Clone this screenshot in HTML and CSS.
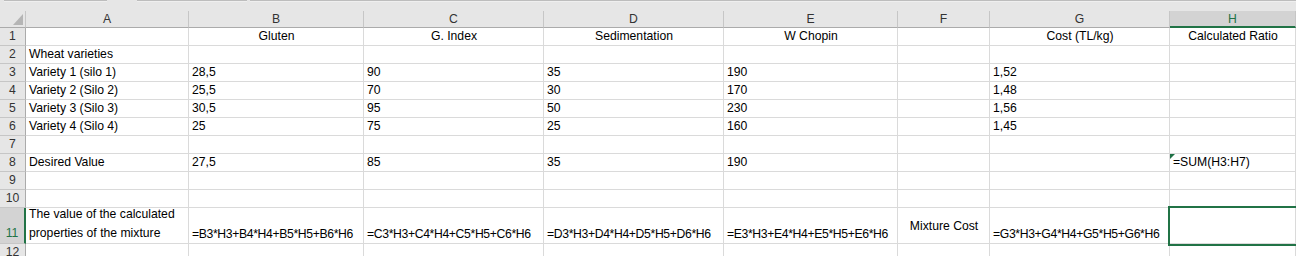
FILE: index.html
```html
<!DOCTYPE html>
<html lang="en">
<head>
    <meta charset="UTF-8">
    <meta name="viewport" content="width=device-width, initial-scale=1.0">
    <title>Wheat blend</title>
    <link rel="stylesheet" href="styles.css">
</head>
<body>
    <div class="strip">
        <span class="tab tab-1"></span>
        <span class="tab tab-2"></span>
        <span class="tab tab-3"></span>
    </div>
    <div class="sheet" id="sheet"></div>

    <script>
        const cols = ['A', 'B', 'C', 'D', 'E', 'F', 'G', 'H'];
        const rows = [
            ['', 'Gluten', 'G. Index', 'Sedimentation', 'W Chopin', '', 'Cost (TL/kg)', 'Calculated Ratio'],
            ['Wheat varieties', '', '', '', '', '', '', ''],
            ['Variety 1 (silo 1)', '28,5', '90', '35', '190', '', '1,52', ''],
            ['Variety 2 (Silo 2)', '25,5', '70', '30', '170', '', '1,48', ''],
            ['Variety 3 (Silo 3)', '30,5', '95', '50', '230', '', '1,56', ''],
            ['Variety 4 (Silo 4)', '25', '75', '25', '160', '', '1,45', ''],
            ['', '', '', '', '', '', '', ''],
            ['Desired Value', '27,5', '85', '35', '190', '', '', '=SUM(H3:H7)'],
            ['', '', '', '', '', '', '', ''],
            ['', '', '', '', '', '', '', ''],
            ['The value of the calculated properties of the mixture',
             '=B3*H3+B4*H4+B5*H5+B6*H6', '=C3*H3+C4*H4+C5*H5+C6*H6',
             '=D3*H3+D4*H4+D5*H5+D6*H6', '=E3*H3+E4*H4+E5*H5+E6*H6',
             'Mixture Cost', '=G3*H3+G4*H4+G5*H5+G6*H6', ''],
            ['', '', '', '', '', '', '', '']
        ];

        let html = '<div class="corner"><span class="select-all"></span></div>';
        cols.forEach(c => {
            html += `<div class="col-head${c === 'H' ? ' active' : ''}">${c}</div>`;
        });
        rows.forEach((row, r) => {
            const n = r + 1;
            const tall = n === 11 ? ' tall' : '';
            html += `<div class="row-head${tall}${n === 11 ? ' active' : ''}">${n}</div>`;
            row.forEach((val, i) => {
                let cls = 'cell' + tall;
                if (n === 1) cls += ' center';
                if (val.startsWith('=') && val.length > 12) cls += ' formula';
                if (n === 11 && i === 0) cls += ' wrap';
                if (n === 11 && i === 5) cls += ' middle';
                if (n === 11 && i === 7) cls += ' selected';
                if (n === 8 && i === 7) cls += ' flagged';
                html += `<div class="${cls}"><span>${val}</span></div>`;
            });
        });
        document.getElementById('sheet').innerHTML = html;
    </script>
</body>
</html>
```

FILE: styles.css
```css
body {
    margin: 0;
    overflow: hidden;
    background-color: #ffffff;
    font-family: "Liberation Sans", Arial, sans-serif;
    font-size: 12.2px;
    color: #000;
}
.strip {
    display: flex;
    height: 11px;
    background-color: #e6e6e6;
}
.tab {
    height: 1px;
    border-top: 1px solid #bdbdbd;
    background-color: #efefef;
}
.tab-1 {
    margin-left: 4px;
    width: 103px;
}
.tab-2 {
    margin-left: 30px;
    width: 110px;
}
.tab-3 {
    margin-left: 3px;
    flex: 1;
}
.sheet {
    display: grid;
    grid-template-columns: 26px 163px 175px 180px 180px 174px 92px 180px 1fr;
    grid-template-rows: 17px repeat(10, 18px) 36px 18px;
}
.corner,
.col-head,
.row-head {
    box-sizing: border-box;
    background-color: #e6e6e6;
    color: #333;
    border-right: 1px solid #c6c6c6;
    border-bottom: 1px solid #ababab;
}
.corner {
    position: relative;
}
.select-all {
    position: absolute;
    right: 2px;
    bottom: 2px;
    width: 0;
    height: 0;
    border-left: 10px solid transparent;
    border-bottom: 11px solid #b5b5b5;
}
.col-head {
    text-align: center;
    line-height: 16px;
}
.col-head.active {
    background-color: #d3d3d3;
    color: #217346;
    border-bottom: 2px solid #217346;
}
.row-head {
    display: flex;
    align-items: flex-end;
    justify-content: center;
    line-height: 17px;
    border-bottom-color: #c6c6c6;
    border-right-color: #ababab;
}
.row-head.tall {
    padding-bottom: 1px;
}
.row-head.active {
    background-color: #d3d3d3;
    color: #217346;
    border-right: 2px solid #217346;
}
.cell {
    box-sizing: border-box;
    display: flex;
    align-items: flex-end;
    padding: 0 2px 1px 3px;
    line-height: 16px;
    white-space: nowrap;
    border-right: 1px solid #dadada;
    border-bottom: 1px solid #dadada;
}
.cell.center {
    justify-content: center;
}
.cell.formula {
    letter-spacing: -0.35px;
}
.cell.tall {
    padding-bottom: 0;
    line-height: 18px;
}
.cell.wrap {
    white-space: normal;
    line-height: 19px;
}
.cell.middle {
    align-items: center;
    justify-content: center;
}
.cell.flagged {
    position: relative;
}
.cell.flagged::before {
    content: "";
    position: absolute;
    left: 0;
    top: 0;
    border-top: 5px solid #1e7145;
    border-right: 5px solid transparent;
}
.cell.selected {
    outline: 2px solid #217346;
    position: relative;
    z-index: 1;
}
```
